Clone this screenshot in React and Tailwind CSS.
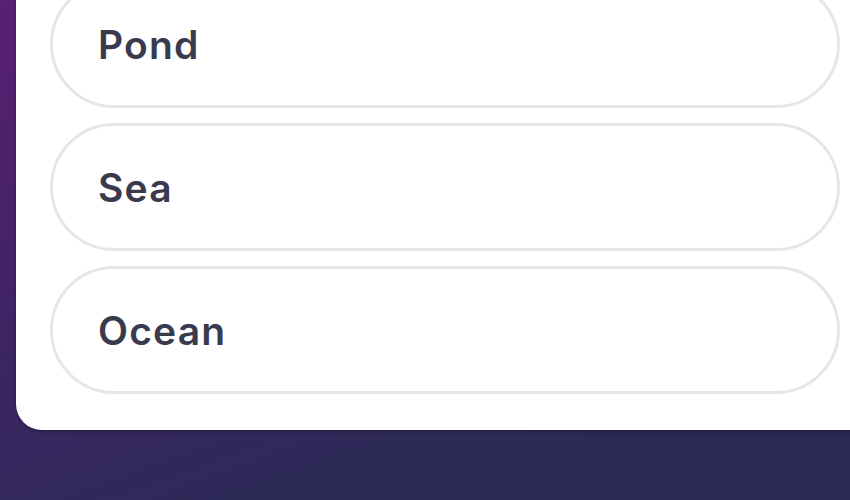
export default function App() {
  const items = ["Pond", "Sea", "Ocean"];
  return (
    <div className="w-[850px] h-[500px] overflow-hidden bg-[linear-gradient(160deg,#5a1f72_0%,#3c2563_45%,#2c2a56_75%,#2a2a52_100%)]">
      <div className="ml-4 mt-[-54px] w-[900px] rounded-bl-[26px] bg-white pl-[34px] pr-[76px] pt-[34px] pb-[36px] shadow-[0_2px_3px_rgba(0,0,0,0.25)]">
        <div className="flex flex-col gap-[15px]">
          {items.map((t) => (
            <div
              key={t}
              className="h-[128px] rounded-full border-[3px] border-[#e6e6e8] bg-white flex items-center pl-[45px] pt-[3px]"
            >
              <span className="text-[39px] font-semibold text-[#3a3a4e] font-['Inter',sans-serif] tracking-[1.2px]">
                {t}
              </span>
            </div>
          ))}
        </div>
      </div>
    </div>
  );
}
